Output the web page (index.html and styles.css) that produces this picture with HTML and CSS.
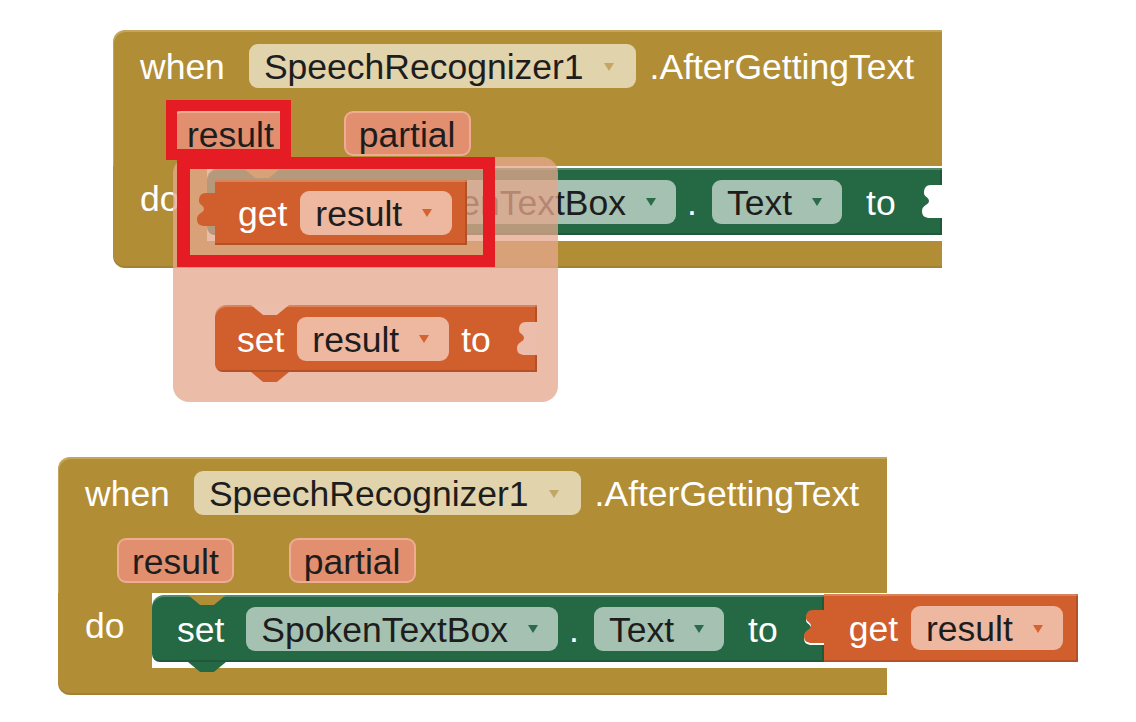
FILE: index.html
```html
<!DOCTYPE html>
<html lang="en">
<head>
<meta charset="utf-8">
<title>SpeechRecognizer blocks</title>
<link rel="stylesheet" href="styles.css">
</head>
<body>
<div class="canvas">

  <div class="event event-top">
    <div class="ev-main">
      <div class="ev-head">
        <span class="lbl">when</span>
        <span class="pill pill-comp">SpeechRecognizer1<i class="arr"></i></span>
        <span class="lbl ev-name">.AfterGettingText</span>
      </div>
      <div class="ev-params">
        <span class="param">result</span>
        <span class="param">partial</span>
      </div>
    </div>
    <div class="ev-do">
      <div class="do-col"><span class="lbl">do</span></div>
      <div class="stmt">
        <div class="blk setblk green prop prop-wide">
          <span class="lbl kw">set</span>
          <span class="pill pill-green comp-field">SpokenTextBox<i class="arr"></i></span>
          <span class="lbl dot">.</span>
          <span class="pill pill-green">Text<i class="arr"></i></span>
          <span class="lbl to">to</span>
          <span class="socket"><svg viewBox="0 0 20 33"><path d="M20,0 H9 C4,0 2,3 2,8 C2,12 7,12 7,16 C7,20 0,20 0,26 C0,31 3,33 8,33 H20 Z"/></svg></span>
        </div>
      </div>
    </div>
    <div class="ev-foot"></div>
  </div>

  <div class="event event-bottom">
    <div class="ev-main">
      <div class="ev-head">
        <span class="lbl">when</span>
        <span class="pill pill-comp">SpeechRecognizer1<i class="arr"></i></span>
        <span class="lbl ev-name">.AfterGettingText</span>
      </div>
      <div class="ev-params">
        <span class="param">result</span>
        <span class="param">partial</span>
      </div>
    </div>
    <div class="ev-do">
      <div class="do-col"><span class="lbl">do</span></div>
      <div class="stmt">
        <div class="blk setblk green prop">
          <span class="lbl kw">set</span>
          <span class="pill pill-green comp-field">SpokenTextBox<i class="arr"></i></span>
          <span class="lbl dot">.</span>
          <span class="pill pill-green">Text<i class="arr"></i></span>
          <span class="lbl to">to</span>
          <span class="socket"><svg viewBox="0 0 20 33"><path d="M20,0 H9 C4,0 2,3 2,8 C2,12 7,12 7,16 C7,20 0,20 0,26 C0,31 3,33 8,33 H20 Z"/></svg></span>
        </div>
        <div class="blk getblk orange attached">
          <span class="tab"><svg viewBox="0 0 20 33"><path d="M20,0 H9 C4,0 2,3 2,8 C2,12 7,12 7,16 C7,20 0,20 0,26 C0,31 3,33 8,33 H20 Z"/></svg></span>
          <span class="lbl kw">get</span>
          <span class="pill pill-orange">result<i class="arr"></i></span>
        </div>
      </div>
    </div>
    <div class="ev-foot"></div>
  </div>

  <div class="flyout">
    <div class="blk getblk orange">
      <span class="tab"><svg viewBox="0 0 20 33"><path d="M20,0 H9 C4,0 2,3 2,8 C2,12 7,12 7,16 C7,20 0,20 0,26 C0,31 3,33 8,33 H20 Z"/></svg></span>
      <span class="lbl kw">get</span>
      <span class="pill pill-orange">result<i class="arr"></i></span>
    </div>
    <div class="blk setblk orange var">
      <span class="lbl kw">set</span>
      <span class="pill pill-orange">result<i class="arr"></i></span>
      <span class="lbl to">to</span>
      <span class="socket"><svg viewBox="0 0 20 33"><path d="M20,0 H9 C4,0 2,3 2,8 C2,12 7,12 7,16 C7,20 0,20 0,26 C0,31 3,33 8,33 H20 Z"/></svg></span>
    </div>
  </div>

  <div class="mark mark-param"></div>
  <div class="mark mark-get"></div>

</div>
</body>
</html>
```

FILE: styles.css
```css
* { box-sizing: border-box; margin: 0; padding: 0; }
html, body { background: #ffffff; }
body {
  font-family: "Liberation Sans", Arial, sans-serif;
  font-size: 35.5px;
  line-height: 1;
}

.canvas {
  position: relative;
  width: 1136px;
  height: 722px;
  overflow: hidden;
}

/* ---------- event (C-shaped) block ---------- */
.event {
  --gold: #b18d36;
  position: absolute;
  width: 829px;
  height: 238px;
  display: flex;
  flex-direction: column;
}
.event-top { left: 113px; top: 30px; }
.event-bottom { left: 58px; top: 457px; }

.ev-main {
  height: 136px;
  padding: 14px 0 0 27px;
  background: var(--gold);
  border-radius: 12px 0 0 0;
  box-shadow: inset 1px 2px 0 rgba(255, 240, 200, 0.25);
}
.ev-head {
  display: flex;
  align-items: center;
  height: 44px;
}
.ev-head .pill { margin-left: 24px; }
.ev-name { margin-left: 14px; }

.ev-params {
  display: flex;
  gap: 55px;
  height: 45px;
  margin: 23px 0 0 32px;
}

.ev-do {
  display: flex;
  height: 75px;
}
.do-col {
  flex: none;
  width: 94px;
  padding: 16px 0 0 27px;
  background: var(--gold);
}
.stmt {
  flex: none;
  display: flex;
  align-items: flex-start;
  padding-top: 2px;
}
.ev-foot {
  height: 27px;
  background: var(--gold);
  border-radius: 0 0 0 12px;
  box-shadow: inset 0 -2px 0 rgba(0, 0, 0, 0.08);
}

/* ---------- text & fields ---------- */
.lbl { color: #ffffff; white-space: nowrap; padding-top: 4px; }
.do-col .lbl { padding-top: 0; }

.pill {
  display: flex;
  align-items: center;
  flex: none;
  height: 44px;
  padding: 4px 20px 0 15px;
  border-radius: 9px;
  color: #1d1d1d;
  white-space: nowrap;
}
.arr {
  width: 0;
  height: 0;
  margin: -3px 0 0 20px;
  border-left: 5.5px solid transparent;
  border-right: 5.5px solid transparent;
  border-top: 8px solid;
}
.pill-comp { background: #e1d3ab; padding-right: 22px; }
.pill-comp .arr { border-top-color: #c2a665; }
.pill-green { background: #a5c1b1; }
.pill-green .arr { border-top-color: #2a6b49; }
.pill-orange { background: #eeb7a0; }
.pill-orange .arr { border-top-color: #d4632f; }

.param {
  display: flex;
  align-items: center;
  height: 45px;
  padding: 4px 13px 0;
  background: #e28f70;
  border: 2px solid #eeac93;
  border-radius: 9px;
  color: #1d1d1d;
}

/* ---------- statement / value blocks ---------- */
.blk {
  position: relative;
  display: flex;
  align-items: center;
  flex: none;
  box-shadow: inset 0 2px 0 rgba(255, 255, 255, 0.22), inset -2px -2px 0 rgba(0, 0, 0, 0.14);
}
.green { background: #256844; }
.orange { background: #d05f2d; }

.setblk {
  z-index: 1;
  height: 67px;
  padding-left: 25px;
  border-radius: 12px 0 0 8px;
}
.setblk::before,
.setblk::after {
  content: "";
  position: absolute;
  left: 36px;
  width: 38px;
  height: 10px;
  clip-path: polygon(0 0, 100% 0, 68% 100%, 32% 100%);
}
.setblk::before { top: 0; background: var(--notch, #b18d36); }
.setblk::after { bottom: -10px; background: inherit; }

.prop .comp-field { margin-left: 22px; }
.prop-wide .comp-field { margin-left: 85px; }
.prop .dot { margin-left: 11px; }
.prop .dot + .pill { margin-left: 15px; }
.prop .to { margin-left: 24px; }

.socket {
  position: relative;
  align-self: stretch;
  width: 20px;
  margin-left: 26px;
  padding: 0;
}
.socket svg {
  position: absolute;
  left: 0;
  top: 17px;
  width: 20px;
  height: 33px;
  fill: var(--cut, #ffffff);
}

.getblk {
  z-index: 2;
  height: 65px;
  padding: 0 15px 0 23px;
}
.getblk .pill { margin-left: 13px; }
.getblk.attached { height: 68px; margin-top: -1px; padding-left: 25px; }
.tab {
  position: absolute;
  left: -18px;
  top: 13px;
  width: 20px;
  height: 33px;
}
.attached .tab { top: 16px; left: -20px; }
.tab svg { width: 20px; height: 33px; fill: #d05f2d; display: block; }

/* ---------- hover flyout ---------- */
.flyout {
  position: absolute;
  left: 173px;
  top: 157px;
  z-index: 5;
  width: 385px;
  height: 245px;
  padding: 23px 0 0 42px;
  display: flex;
  flex-direction: column;
  align-items: flex-start;
  gap: 60px;
  border-radius: 16px;
  background: rgba(229, 167, 140, 0.76);
}
.var { --notch: #ecbdaa; --cut: #ecbdaa; padding-left: 22px; }
.var .pill { margin-left: 13px; }
.var .to { margin-left: 12px; }

/* ---------- red annotations ---------- */
.mark {
  position: absolute;
  z-index: 6;
  border: 11px solid #e51c23;
}
.mark-param { left: 166px; top: 100px; width: 125px; height: 60px; }
.mark-get { left: 177px; top: 157px; width: 318px; height: 110px; border-width: 12px 12px 12px 13px; }
```
